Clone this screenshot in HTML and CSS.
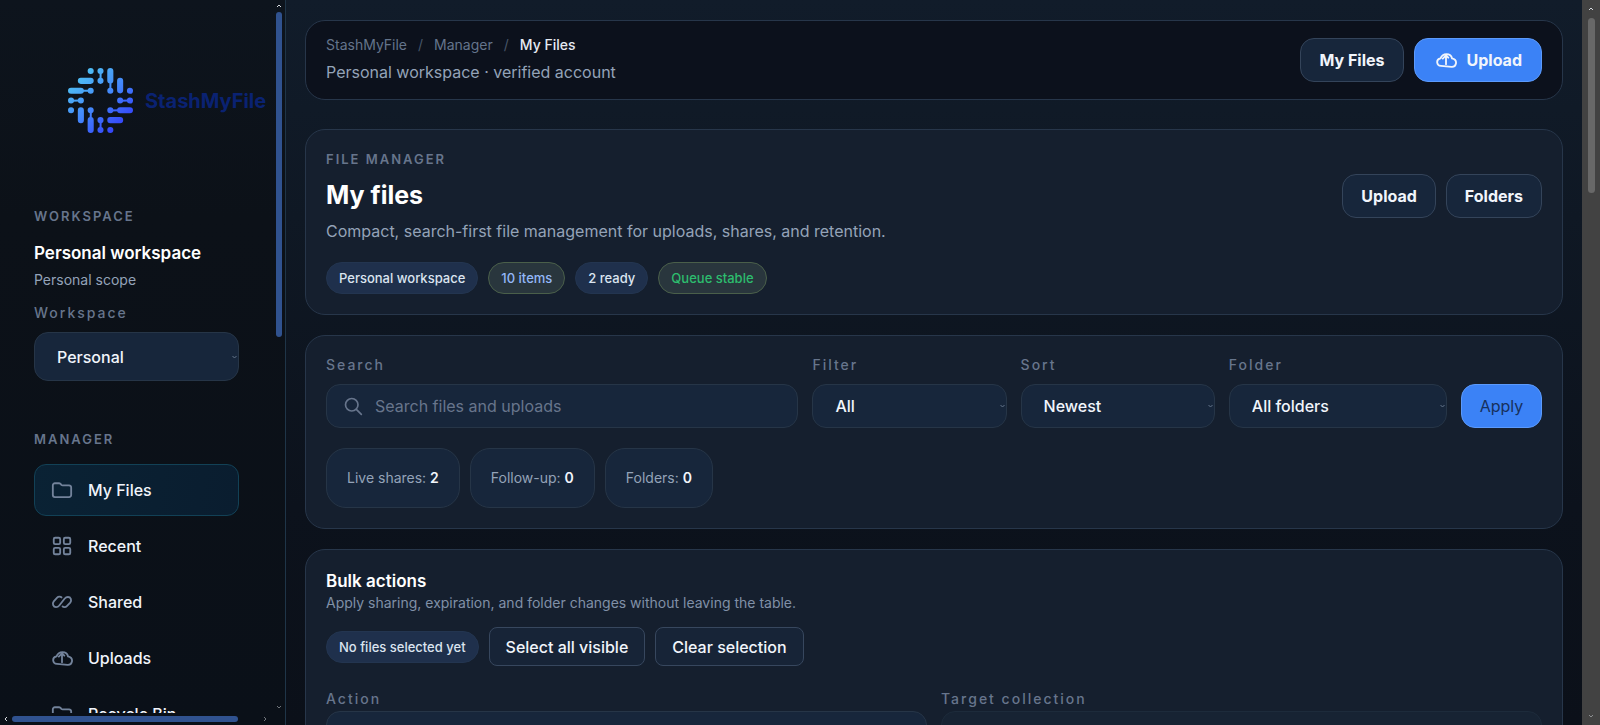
FILE: index.html
```html
<!DOCTYPE html>
<html lang="en">
<head>
<meta charset="utf-8">
<meta name="viewport" content="width=device-width, initial-scale=1">
<title>My Files - StashMyFile</title>
<link rel="stylesheet" href="styles.css">
</head>
<body>
<svg class="sprite" aria-hidden="true">
  <symbol id="i-folder" viewBox="0 0 24 24"><path d="M2 17.500V6.800A2.200 2.200 0 0 1 4.200 4.600H8.600C9.400 4.600 9.900 4.900 10.400 5.400L11.300 6.400C11.700 6.800 12.100 7 12.700 7H19.800A2.200 2.200 0 0 1 22 9.200V17.500A2.200 2.200 0 0 1 19.800 19.700H4.200A2.200 2.200 0 0 1 2 17.500Z"/></symbol>
  <symbol id="i-grid" viewBox="0 0 24 24"><rect x="3" y="3" width="7" height="7" rx="1.500"/><rect x="14" y="3" width="7" height="7" rx="1.500"/><rect x="3" y="14" width="7" height="7" rx="1.500"/><rect x="14" y="14" width="7" height="7" rx="1.500"/></symbol>
  <symbol id="i-link" viewBox="0 0 24 24"><path d="M11.500 7C10.500 5.800 8 5.800 6.700 7.200L3 11.300C1 13.800 2.500 17.500 5.500 17.500C7 17.500 8 17 9 15.800L15 8.200C16 7 17 6.500 18.500 6.500C21.500 6.500 23 10 21 12.700L17.300 16.600C16 18 13.600 18 12.600 16.800"/></symbol>
  <symbol id="i-cloud" viewBox="0 0 24 24"><path d="M6.500 18.500C1.500 18.300 .7 11.500 6 10.300C7 7.800 9.300 5.600 12.500 5.600C15.800 5.600 18 7.400 18.600 10.300C21.400 11 23.300 13 22.900 15.800C22.500 18.300 20.500 19.700 18 19.500L6.500 18.500M12 16.500V7M8.500 10.500L12 7L14.500 9.500"/></symbol>
  <symbol id="i-search" viewBox="0 0 24 24"><circle cx="10.500" cy="10.500" r="7.500"/><path d="M16 16L22 22"/></symbol>
</svg>
<div class="app">
  <aside class="sidebar">
    <div class="sidebar-body">
      <a class="brand" href="#">
        <svg class="brand-mark" viewBox="0 0 192 192" aria-hidden="true">
          <defs><linearGradient id="mark" gradientUnits="userSpaceOnUse" x1="30" y1="20" x2="160" y2="175"><stop offset="0" stop-color="#4fc0f2"/><stop offset=".5" stop-color="#4488fb"/><stop offset="1" stop-color="#3340fa"/></linearGradient></defs>
          <g fill="none" stroke="url(#mark)" stroke-linecap="round">
            <path stroke-width="18" d="M67 9h.01M96 9h.01M96 38h.01M125 9v28M125 67h.01M38 38h29M154 38v28M9 67h29M67 67h.01M183 67h.01M9 96h.01M38 96h.01M154 96h.01M183 96h.01M9 125h.01M38 125v29M67 125h.01M67 154v29M125 125h.01M154 125h29M96 154h.01M96 183h.01M125 154h29M125 183h.01"/>
            <path stroke-width="6" d="M96.500 9L96 38M125.500 38L125 67M38 67.500L67 67M9 96.500L38 96M154 96.500L183 96M67.500 125L67 154M125 125.500L154 125M96.500 154L96 183"/>
          </g>
        </svg>
        <span>StashMyFile</span>
      </a>
      <section class="scope">
        <h2 class="eyebrow">WORKSPACE</h2>
        <strong class="scope-name">Personal workspace</strong>
        <span class="scope-note">Personal scope</span>
        <label class="label" for="workspace">Workspace</label>
        <select class="control control-tall" id="workspace"><option>Personal</option></select>
      </section>
      <nav class="nav" aria-label="Manager">
        <h2 class="eyebrow">MANAGER</h2>
        <a class="nav-item active" href="#"><svg class="icon"><use href="#i-folder"/></svg>My Files</a>
        <a class="nav-item" href="#"><svg class="icon"><use href="#i-grid"/></svg>Recent</a>
        <a class="nav-item" href="#"><svg class="icon"><use href="#i-link"/></svg>Shared</a>
        <a class="nav-item" href="#"><svg class="icon"><use href="#i-cloud"/></svg>Uploads</a>
        <a class="nav-item" href="#"><svg class="icon"><use href="#i-folder"/></svg>Recycle Bin</a>
      </nav>
    </div>
    <div class="vbar" aria-hidden="true"><svg class="caret" viewBox="0 0 6 4"><path d="M1 3L3 1L5 3"/></svg><i class="vthumb"></i><svg class="caret dim" viewBox="0 0 6 4"><path d="M1 1L3 3L5 1"/></svg></div>
    <div class="hbar" aria-hidden="true"><svg class="caret" viewBox="0 0 6 6"><path d="M4 1L2 3L4 5"/></svg><i class="hthumb"></i><svg class="caret dim" viewBox="0 0 6 6"><path d="M2 1L4 3L2 5"/></svg></div>
  </aside>

  <main class="main">
    <header class="panel topbar">
      <div>
        <nav class="crumbs" aria-label="Breadcrumb"><a href="#">StashMyFile</a><span class="slash">/</span><a href="#">Manager</a><span class="slash">/</span><span class="here">My Files</span></nav>
        <p class="lead">Personal workspace · verified account</p>
      </div>
      <div class="actions">
        <button class="btn" type="button">My Files</button>
        <button class="btn primary" type="button"><svg class="icon"><use href="#i-cloud"/></svg>Upload</button>
      </div>
    </header>

    <section class="panel hero">
      <div class="hero-row">
        <div class="hero-text">
          <p class="eyebrow">FILE MANAGER</p>
          <h1 class="title">My files</h1>
          <p class="lead">Compact, search-first file management for uploads, shares, and retention.</p>
        </div>
        <div class="actions">
          <button class="btn" type="button">Upload</button>
          <button class="btn" type="button">Folders</button>
        </div>
      </div>
      <div class="row">
        <span class="pill">Personal workspace</span>
        <span class="pill olive info">10 items</span>
        <span class="pill">2 ready</span>
        <span class="pill olive good">Queue stable</span>
      </div>
    </section>

    <section class="panel">
      <form class="filters">
        <div class="field">
          <label class="label" for="q">Search</label>
          <div class="search"><svg class="icon"><use href="#i-search"/></svg><input id="q" type="search" placeholder="Search files and uploads"></div>
        </div>
        <div class="field"><label class="label" for="filter">Filter</label><select class="control" id="filter"><option>All</option></select></div>
        <div class="field"><label class="label" for="sort">Sort</label><select class="control" id="sort"><option>Newest</option></select></div>
        <div class="field"><label class="label" for="folder">Folder</label><select class="control" id="folder"><option>All folders</option></select></div>
        <button class="btn primary apply" type="button">Apply</button>
      </form>
      <div class="row stats">
        <span class="stat">Live shares: <b>2</b></span>
        <span class="stat">Follow-up: <b>0</b></span>
        <span class="stat">Folders: <b>0</b></span>
      </div>
    </section>

    <section class="panel bulk">
      <h2 class="bulk-title">Bulk actions</h2>
      <p class="bulk-note">Apply sharing, expiration, and folder changes without leaving the table.</p>
      <div class="row bulk-row">
        <span class="pill">No files selected yet</span>
        <button class="btn-flat" type="button">Select all visible</button>
        <button class="btn-flat" type="button">Clear selection</button>
      </div>
      <div class="bulk-fields">
        <div class="field tight"><label class="label" for="action">Action</label><select class="control" id="action"><option>Share</option></select></div>
        <div class="field tight"><label class="label" for="target">Target collection</label><select class="control muted" id="target"><option>None</option></select></div>
      </div>
    </section>
  </main>
  <div class="pagebar" aria-hidden="true"><svg class="caret" viewBox="0 0 6 4"><path d="M1 3L3 1L5 3"/></svg><i class="pagethumb"></i><svg class="caret dim" viewBox="0 0 6 4"><path d="M1 1L3 3L5 1"/></svg></div>
</div>
</body>
</html>
```
FILE: styles.css
```css
* { box-sizing: border-box; }
body, h1, h2, p { margin: 0; }
body {
  font-family: Inter, "Liberation Sans", sans-serif;
  font-size: 16px;
  color: #f1f5fb;
  background: #0c121b;
}
a { color: inherit; text-decoration: none; }
button, input, select { font: inherit; color: inherit; }
.sprite { position: absolute; width: 0; height: 0; }
.icon { width: 22px; height: 22px; flex: none; fill: none; stroke: currentColor; stroke-width: 2; stroke-linecap: round; stroke-linejoin: round; }
.caret { width: 6px; height: 6px; flex: none; fill: none; stroke: #d5d9de; stroke-width: 1; }
.caret.dim { opacity: .5; }

.app {
  display: grid;
  grid-template-columns: 286px minmax(0, 1fr) 18px;
  height: 100vh;
  overflow: hidden;
}

/* Sidebar */
.sidebar {
  display: grid;
  grid-template-columns: minmax(0, 1fr) 16px;
  grid-template-rows: minmax(0, 1fr) 12px;
  border-right: 1px solid #1f3548;
  background: linear-gradient(#0d141d, #0c1118 30%, #0a1018);
  min-height: 0;
}
.sidebar-body { padding: 68px 30px 0 34px; overflow: hidden; }
.brand {
  display: flex;
  align-items: center;
  gap: 12px;
  padding-left: 34px;
  margin-bottom: 74px;
  font-family: Inter, sans-serif;
  font-weight: 700;
  font-size: 20px;
  color: #0a2272;
}
.brand-mark { width: 65px; height: 65px; flex: none; }
.eyebrow { font-size: 13px; line-height: 18px; font-weight: 600; letter-spacing: 2px; color: #67758c; }
.scope { display: flex; flex-direction: column; margin-bottom: 49px; }
.scope-name { margin-top: 17px; font-size: 17px; line-height: 22px; font-weight: 600; color: #fff; }
.scope-note { margin-top: 6px; font-size: 14px; line-height: 20px; color: #94a3b8; }
.scope .label { margin: 14px 0 10px; }
.label { font-size: 14px; line-height: 18px; font-weight: 500; letter-spacing: 2px; color: #67758c; }
.control {
  appearance: none;
  width: 100%;
  min-width: 0;
  height: 44px;
  padding: 0 22px;
  border: 1px solid #263547;
  border-radius: 14px;
  background: #17263b url("data:image/svg+xml,%3Csvg xmlns='http://www.w3.org/2000/svg' width='5' height='4'%3E%3Cpath d='M.5 1l2 2 2-2' fill='none' stroke='%2364748b'/%3E%3C/svg%3E") no-repeat right 1px center;
  font-size: 16px;
  font-weight: 500;
}
.control-tall { height: 49px; }
.control.muted { background-color: #172333; border-color: #1d2b3b; color: #67758c; }
.nav { display: grid; gap: 4px; }
.nav .eyebrow { margin-bottom: 12px; }
.nav-item {
  display: flex;
  align-items: center;
  gap: 15px;
  height: 52px;
  padding: 0 16px;
  border: 1px solid transparent;
  border-radius: 12px;
  font-size: 16px;
  font-weight: 500;
}
.nav-item .icon { color: #73839b; }
.nav-item.active { border-color: #124156; background: linear-gradient(100deg, #0a2234, #0a1d2f); }

/* Scrollbars */
.vbar { display: flex; flex-direction: column; align-items: center; gap: 3px; padding: 3px 0 3px 3px; }
.vthumb { width: 6px; height: 46%; margin-bottom: auto; border-radius: 3px; background: #30528f; }
.hbar { display: flex; align-items: center; gap: 3px; padding: 0 0 0 3px; }
.hthumb { width: 85%; height: 6px; margin-right: auto; border-radius: 3px; background: #30528f; }
.hbar .dim { margin-right: 1px; }
.pagebar { display: flex; flex-direction: column; align-items: center; gap: 6px; padding: 6px 0; background: #424242; }
.pagethumb { width: 7px; height: 175px; margin-bottom: auto; border-radius: 4px; background: #686868; }

/* Content */
.main {
  display: flex;
  flex-direction: column;
  gap: 20px;
  padding: 20px 19px;
  overflow: hidden;
  background: linear-gradient(#111c2a, #0f1824 30%, #0c121c 70%, #0b1019);
}
.panel { flex: none; padding: 20px; border: 1px solid #27364a; border-radius: 20px; background: #151f2e; }
.topbar {
  display: flex;
  justify-content: space-between;
  align-items: center;
  padding: 12px 20px;
  min-height: 80px;
  margin-bottom: 9px;
  background: #0c111c;
}
.crumbs { display: flex; gap: 11px; font-size: 14px; line-height: 20px; color: #64748b; }
.slash { color: #475569; }
.here { font-weight: 500; color: #e5eaf2; }
.lead { font-size: 16px; line-height: 21px; color: #94a3b8; }
.topbar .lead { margin: 7px 0 2px; }
.actions, .row { display: flex; align-items: center; gap: 10px; }
.btn {
  display: flex;
  align-items: center;
  justify-content: center;
  gap: 10px;
  height: 44px;
  padding: 0 18px;
  border: 1px solid #34445a;
  border-radius: 14px;
  background: #17263b;
  font-size: 16px;
  font-weight: 700;
}
.primary { padding: 0 19px 0 20px; border-color: #5c9afb; background: #3b82f6; }
.hero-row { display: flex; justify-content: space-between; align-items: center; margin-bottom: 20px; }
.title { margin: 9px 0 8px; font-size: 25px; line-height: 36px; font-weight: 700; color: #fff; }
.pill {
  padding: 0 12px;
  border: 1px solid #233550;
  border-radius: 16px;
  background: #1f304c;
  font-size: 13px;
  line-height: 30px;
  font-weight: 500;
  color: #dbe4f0;
}
.olive { border-color: #4a5f4a; background: #29363d; }
.info { color: #93b8f8; }
.good { color: #2dbd6e; }

.filters { display: grid; grid-template-columns: minmax(0, 472fr) minmax(0, 194fr) minmax(0, 194fr) minmax(0, 218fr) 81px; gap: 14px; align-items: end; }
.field { display: flex; flex-direction: column; gap: 10px; }
.search {
  display: flex;
  align-items: center;
  gap: 12px;
  height: 44px;
  padding: 0 16px;
  border: 1px solid #263547;
  border-radius: 14px;
  background: #17263b;
  color: #67758c;
}
.search .icon { width: 20px; height: 20px; }
.search input { flex: 1; min-width: 0; padding: 0; border: 0; outline: 0; background: none; font-size: 16px; }
.search input::placeholder { color: #67758c; opacity: 1; }
.apply { padding: 0; font-weight: 400; color: #17305c; }
.stats { margin-top: 20px; }
.stat { padding: 0 20px; border: 1px solid #263547; border-radius: 20px; background: #17263b; font-size: 14px; line-height: 58px; color: #94a3b8; }
.stat b { font-weight: 600; color: #f1f5fb; }
.bulk-title { font-size: 17px; line-height: 22px; font-weight: 600; color: #fff; }
.bulk-note { font-size: 14px; line-height: 22px; color: #8090a7; }
.bulk-row { margin: 13px 0 24px; }
.btn-flat { height: 39px; padding: 0 16px; border: 1px solid #37475e; border-radius: 8px; background: #172437; font-size: 16px; font-weight: 500; }
.bulk-fields { display: grid; grid-template-columns: 1fr 1fr; gap: 14px; }
.tight { gap: 3px; }
```
